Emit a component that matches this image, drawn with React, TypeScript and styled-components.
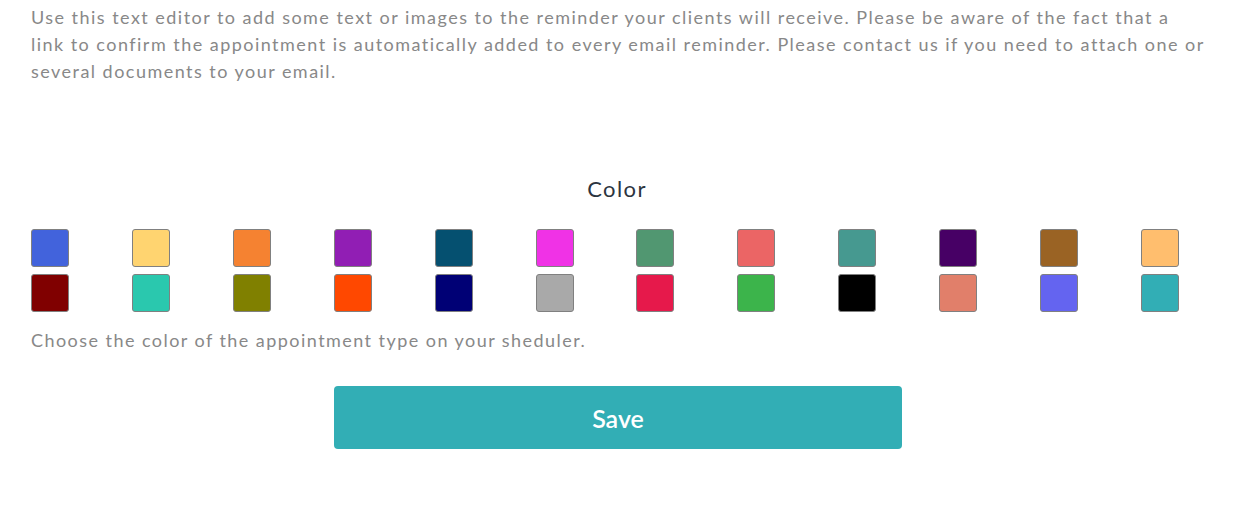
import React from "react";
import styled, { createGlobalStyle } from "styled-components";

const GlobalStyle = createGlobalStyle`
    body {
        margin: 0;
        background: #ffffff;
        font-family: Lato, "Open Sans", sans-serif;
    }
`;

const Page = styled.div`
    display: flex;
    flex-direction: column;
    padding: 4px 28px 0 31px;
`;

const Intro = styled.p`
    margin: 0;
    font-size: 18px;
    line-height: 27px;
    letter-spacing: 1.47px;
    color: #888888;
`;

const Label = styled.div`
    margin-top: 91px;
    margin-right: 5px;
    text-align: center;
    font-size: 22px;
    line-height: 26px;
    letter-spacing: 1.4px;
    color: #2c3440;
`;

const Palette = styled.div`
    display: flex;
    flex-direction: column;
    gap: 7px;
    width: 1148px;
    margin-top: 27px;
`;

const SwatchRow = styled.div`
    display: flex;
    justify-content: space-between;
`;

const Swatch = styled.div<{ $color: string }>`
    width: 38px;
    height: 38px;
    box-sizing: border-box;
    border: 1px solid #808080;
    border-radius: 3px;
    background: ${(p) => p.$color};
    cursor: pointer;
`;

const Hint = styled.p`
    margin: 16px 0 0 0;
    font-size: 18px;
    line-height: 24px;
    letter-spacing: 1.45px;
    color: #888888;
`;

const SaveButton = styled.button`
    align-self: center;
    width: 568px;
    height: 63px;
    margin-top: 34px;
    margin-left: -3px;
    border: none;
    border-radius: 4px;
    background: #32aeb5;
    color: #ffffff;
    font-family: Lato, "Open Sans", sans-serif;
    font-size: 25px;
    font-weight: 600;
    cursor: pointer;
`;

const topRow = [
    "#4263dc", "#ffd470", "#f58231", "#911eb4", "#055070", "#f032e6",
    "#519771", "#eb6565", "#469990", "#470065", "#9a6324", "#ffbe6e",
];

const bottomRow = [
    "#800000", "#2ac8ae", "#808000", "#ff4800", "#000075", "#a9a9a9",
    "#e6194b", "#3cb44b", "#000000", "#e17f6a", "#6464f0", "#32aeb5",
];

function App() {
    return (
        <>
            <GlobalStyle />
            <Page>
                <Intro>
                    Use this text editor to add some text or images to the reminder your
                    clients will receive. Please be aware of the fact that a link to confirm
                    the appointment is automatically added to every email reminder. Please
                    contact us if you need to attach one or several documents to your email.
                </Intro>
                <Label>Color</Label>
                <Palette>
                    <SwatchRow>
                        {topRow.map((c) => (
                            <Swatch key={c} $color={c} />
                        ))}
                    </SwatchRow>
                    <SwatchRow>
                        {bottomRow.map((c) => (
                            <Swatch key={c} $color={c} />
                        ))}
                    </SwatchRow>
                </Palette>
                <Hint>Choose the color of the appointment type on your sheduler.</Hint>
                <SaveButton>Save</SaveButton>
            </Page>
        </>
    );
}

export default App;
